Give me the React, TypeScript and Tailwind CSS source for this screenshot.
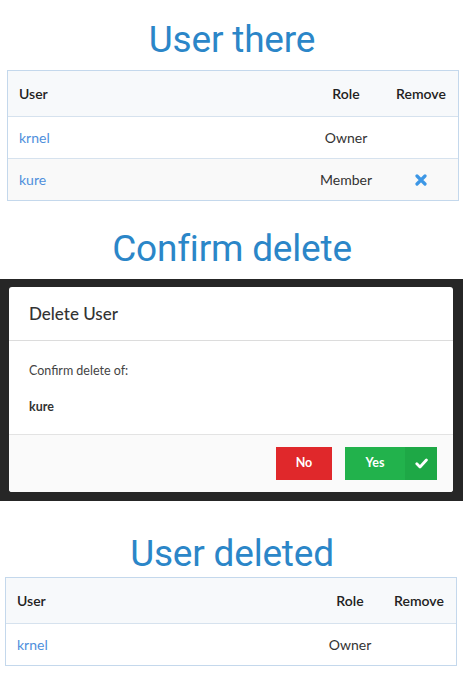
import React from 'react';

type Member = { name: string; role: string; removable?: boolean };

const TimesIcon: React.FC = () => (
  <svg width="12" height="12" viewBox="0 0 12 12" className="inline-block">
    <path d="M2 2 L10 10 M10 2 L2 10" stroke="#3d97e6" strokeWidth="3.2" strokeLinecap="round" />
  </svg>
);

const CheckIcon: React.FC = () => (
  <svg width="13" height="11" viewBox="0 0 13 11">
    <path d="M1.8 5.8 L5 9 L11.4 2" stroke="#ffffff" strokeWidth="2.8" fill="none" strokeLinecap="round" strokeLinejoin="round" />
  </svg>
);

const Title: React.FC<{ children: React.ReactNode; className: string }> = ({ children, className }) => (
  <div className={`flex items-center justify-center ${className}`}>
    <h1 className="font-['Roboto',sans-serif] text-[37px] leading-none text-[#2b86c8] tracking-[-0.2px]">{children}</h1>
  </div>
);

const UsersTable: React.FC<{ rows: Member[]; cols: string; className: string }> = ({ rows, cols, className }) => (
  <div className={`border border-[#c4d8ec] font-['Lato',sans-serif] text-[14px] ${className}`}>
    <div className={`grid ${cols} h-[45px] items-center bg-[#f7f9fb] font-semibold text-[#222]`}>
      <span className="pl-[11px]">User</span>
      <span className="text-center">Role</span>
      <span className="text-center">Remove</span>
    </div>
    {rows.map((r, i) => (
      <div
        key={r.name}
        className={`grid ${cols} h-[42px] items-center border-t border-[#d6e2ee] ${i % 2 === 1 ? 'bg-[#f9f9f9]' : 'bg-white'}`}
      >
        <span className="pl-[11px] text-[#4f8fdc]">{r.name}</span>
        <span className="text-center text-[#333]">{r.role}</span>
        <span className="flex justify-center">{r.removable && <TimesIcon />}</span>
      </div>
    ))}
  </div>
);

const DeleteModal: React.FC = () => (
  <div className="bg-[#262626] pt-[8px] pb-[9px] pl-[9px] mr-[1px]">
    <div className="w-[444px] bg-white rounded-[3px] font-['Lato',sans-serif] text-[#333]">
      <div className="h-[54px] flex items-center pl-[20px] text-[17px] font-medium border-b border-[#dcdcdc]">
        Delete User
      </div>
      <div className="h-[93px] pl-[20px] text-[12.5px]">
        <p className="pt-[21px] text-[#444]">Confirm delete of:</p>
        <p className="pt-[17px] font-bold text-[#333]">kure</p>
      </div>
      <div className="h-[58px] border-t border-[#e3e3e3] bg-[#fafafa] rounded-b-[3px] flex items-start justify-end pt-[12px] pr-[16px] gap-[13px]">
        <button className="h-[33px] w-[56px] bg-[#e0282b] text-white text-[12.5px] font-bold">No</button>
        <button className="h-[33px] w-[92px] flex text-white text-[12.5px] font-bold">
          <span className="h-full w-[60px] bg-[#22b24c] flex items-center justify-center">Yes</span>
          <span className="h-full flex-1 bg-[#1ea846] flex items-center justify-center"><CheckIcon /></span>
        </button>
      </div>
    </div>
  </div>
);

const App: React.FC = () => {
  const before: Member[] = [
    { name: 'krnel', role: 'Owner' },
    { name: 'kure', role: 'Member', removable: true },
  ];
  const after: Member[] = [{ name: 'krnel', role: 'Owner' }];

  return (
    <div className="w-[464px] h-[675px] bg-white overflow-hidden">
      <Title className="h-[70px] pt-[8px]">User there</Title>
      <UsersTable rows={before} cols="grid-cols-[1fr_76px_74px]" className="ml-[7px] w-[452px]" />
      <Title className="h-[78px] pt-[16px]">Confirm delete</Title>
      <DeleteModal />
      <Title className="h-[76px] pt-[28px]">User deleted</Title>
      <UsersTable rows={after} cols="grid-cols-[1fr_64px_74px]" className="ml-[5px] w-[452px]" />
    </div>
  );
};

export default App;
